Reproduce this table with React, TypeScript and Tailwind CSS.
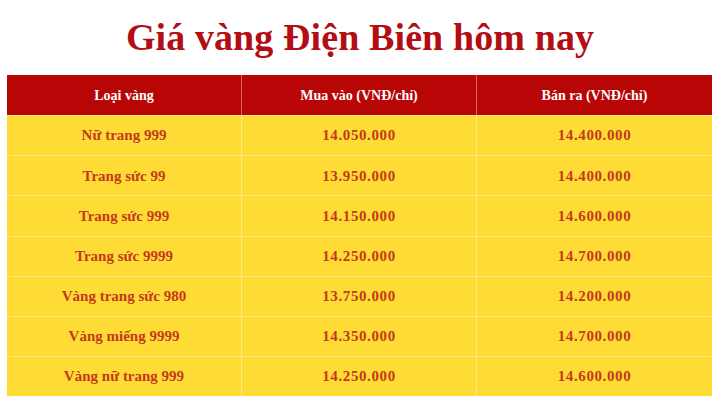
import React from "react";

const rows: [string, string, string][] = [
  ["Nữ trang 999", "14.050.000", "14.400.000"],
  ["Trang sức 99", "13.950.000", "14.400.000"],
  ["Trang sức 999", "14.150.000", "14.600.000"],
  ["Trang sức 9999", "14.250.000", "14.700.000"],
  ["Vàng trang sức 980", "13.750.000", "14.200.000"],
  ["Vàng miếng 9999", "14.350.000", "14.700.000"],
  ["Vàng nữ trang 999", "14.250.000", "14.600.000"],
];

export default function App() {
  return (
    <div
      className="w-[720px] h-[404px] bg-white overflow-hidden"
      style={{ fontFamily: '"Liberation Serif", "DejaVu Serif", serif' }}
    >
      <h1 className="h-[75px] pt-[15px] text-center text-[38px] leading-[44px] font-bold text-[#b20e13] tracking-[0.1px]">
        Giá vàng Điện Biên hôm nay
      </h1>
      <div className="mx-[7px] w-[705px]">
        <div className="grid grid-cols-3 h-[40px] bg-[#b80505] text-white text-[14px] font-bold">
          <div className="flex items-center justify-center border-r border-[#d96a5a]">Loại vàng</div>
          <div className="flex items-center justify-center border-r border-[#d96a5a]">Mua vào (VNĐ/chỉ)</div>
          <div className="flex items-center justify-center">Bán ra (VNĐ/chỉ)</div>
        </div>
        {rows.map((r, i) => (
          <div
            key={i}
            className="grid grid-cols-3 h-[40.2px] bg-[#fedc35] text-[#c4391a] text-[15px] font-bold border-t border-[#fbe98c]"
          >
            <div className="flex items-center justify-center border-r border-[#fbe98c]">{r[0]}</div>
            <div className="flex items-center justify-center border-r border-[#fbe98c] tracking-[0.6px]">{r[1]}</div>
            <div className="flex items-center justify-center tracking-[0.6px]">{r[2]}</div>
          </div>
        ))}
      </div>
    </div>
  );
}
